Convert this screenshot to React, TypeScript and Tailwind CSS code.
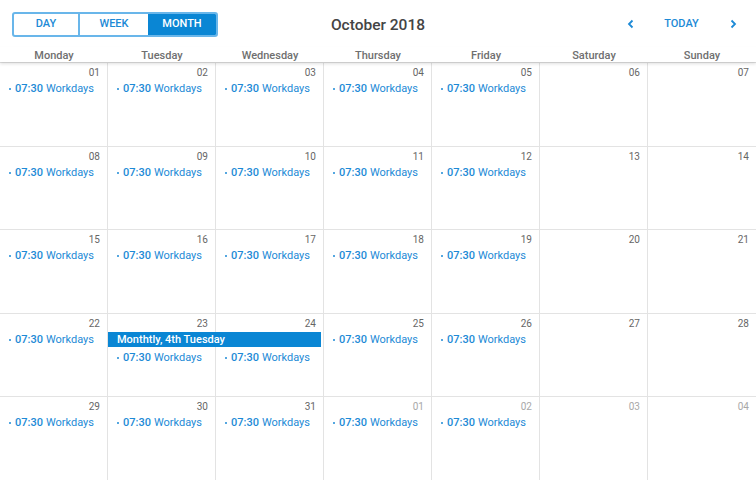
import React from "react";

const days = ["Monday", "Tuesday", "Wednesday", "Thursday", "Friday", "Saturday", "Sunday"];

type Cell = { n: string; other?: boolean; work?: boolean };

const weeks: Cell[][] = [0, 1, 2, 3].map((w) =>
  [0, 1, 2, 3, 4, 5, 6].map((d) => ({
    n: String(w * 7 + d + 1).padStart(2, "0"),
    work: d < 5,
  }))
);
weeks.push([
  { n: "29", work: true },
  { n: "30", work: true },
  { n: "31", work: true },
  { n: "01", other: true, work: true },
  { n: "02", other: true, work: true },
  { n: "03", other: true },
  { n: "04", other: true },
]);

const Workday = () => (
  <div className="flex items-center h-[14px] pl-[9px] text-[11px] leading-[14px] text-[#1d8ad6] whitespace-nowrap">
    <span className="w-[2px] h-[2px] bg-[#1d8ad6] mr-[4px] rounded-full" />
    <span className="font-medium">07:30</span>
    <span className="ml-[3px]">Workdays</span>
  </div>
);

export default function App() {
  return (
    <div
      className="w-[756px] h-[480px] bg-white flex flex-col overflow-hidden"
      style={{ fontFamily: "Roboto, 'Liberation Sans', sans-serif" }}
    >
      <div className="grid grid-cols-[1fr_auto_1fr] items-center h-[47px] pt-[1px] pl-[12px] pr-[18px]">
        <div className="flex h-[25px] w-[206px] border-2 border-[#69b6ea] rounded-[3px] overflow-hidden text-[11px] font-medium">
          <div className="w-[66px] flex items-center justify-center text-[#1d8ad6] border-r-2 border-[#69b6ea]">DAY</div>
          <div className="w-[68px] flex items-center justify-center text-[#1d8ad6]">WEEK</div>
          <div className="flex-1 flex items-center justify-center bg-[#0a86d4] text-white">MONTH</div>
        </div>
        <div className="text-center text-[15.5px] leading-[20px] font-medium text-[#444] pl-[6px] pt-[2px]">October 2018</div>
        <div className="flex items-center justify-end text-[#1d8ad6]">
          <svg width="10" height="10" viewBox="0 0 10 10" className="mr-[28px]">
            <path d="M6.5 1.5 3 5l3.5 3.5" fill="none" stroke="currentColor" strokeWidth="1.8" />
          </svg>
          <span className="text-[11px] font-medium w-[35px] text-center">TODAY</span>
          <svg width="10" height="10" viewBox="0 0 10 10" className="ml-[29px]">
            <path d="M3.5 1.5 7 5l-3.5 3.5" fill="none" stroke="currentColor" strokeWidth="1.8" />
          </svg>
        </div>
      </div>
      <div className="grid grid-cols-7 h-[15px] pt-[2px] relative z-10 shadow-[0_2px_3px_rgba(0,0,0,0.12)]">
        {days.map((d) => (
          <div key={d} className="text-center text-[11px] leading-[13px] font-medium text-[#6f6f6f]">
            {d}
          </div>
        ))}
      </div>
      <div className="flex-1 flex flex-col">
        {weeks.map((wk, wi) => (
          <div key={wi} className="flex-1 grid grid-cols-7 border-t border-[#e3e3e3] relative">
            {wk.map((c, ci) => (
              <div key={ci} className={`flex flex-col ${ci < 6 ? "border-r border-[#e3e3e3]" : ""}`}>
                <div
                  className={`h-[18px] pt-[3px] pr-[7px] text-right text-[10px] leading-[14px] ${
                    c.other ? "text-[#a8a8a8]" : "text-[#666]"
                  }`}
                >
                  {c.n}
                </div>
                {wi === 3 && (ci === 1 || ci === 2) && <div className="h-[18px]" />}
                {c.work && (
                  <div className="pt-[1px]">
                    <Workday />
                  </div>
                )}
              </div>
            ))}
            {wi === 3 && (
              <div className="absolute left-[108px] top-[18px] w-[213px] h-[15px] bg-[#0a86d4] text-white text-[11px] leading-[15px] font-medium pl-[9px]">
                Monthtly, 4th Tuesday
              </div>
            )}
          </div>
        ))}
      </div>
    </div>
  );
}
